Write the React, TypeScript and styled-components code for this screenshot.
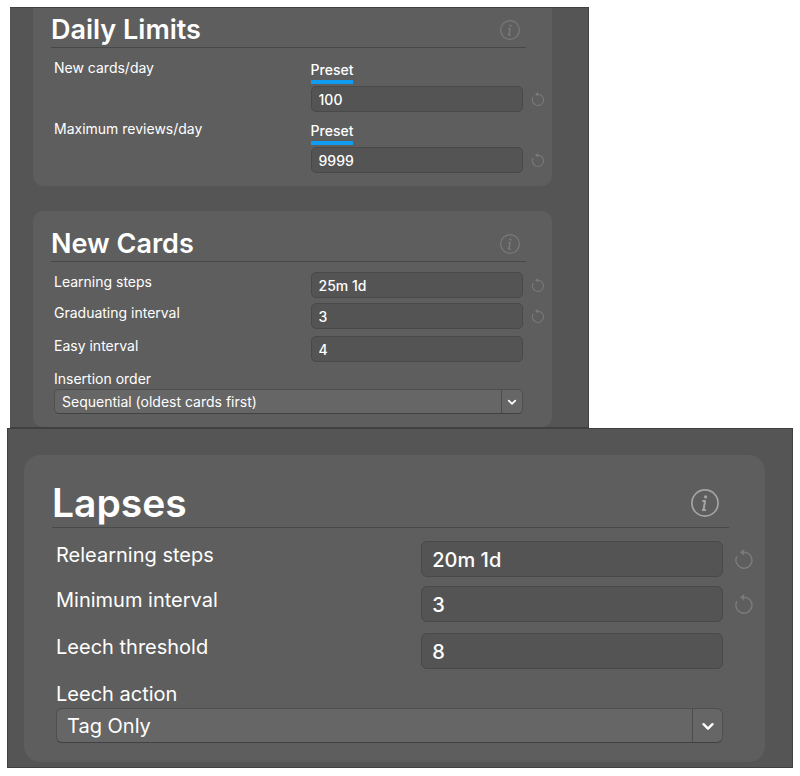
import React, { useId } from "react";
import styled, { createGlobalStyle, ThemeProvider } from "styled-components";

const regular = {
  cardX: 18,
  cardTop: 16,
  cardBottom: 13,
  radius: 10,
  title: 27,
  titleLine: 34,
  titleGap: 10,
  titleRight: 26,
  infoRight: 6,
  info: 20,
  infoColor: "#7a7a7a",
  indent: 3,
  text: 14,
  line: 20,
  rowGap: 5,
  looseGap: 7,
  input: 26,
  inputPad: 7,
  inputRadius: 5,
  select: 25,
  arrow: 21,
  chevron: 10,
  tail: 29,
  reset: 14,
  resetLeft: 8,
};

const large = {
  cardX: 28,
  cardTop: 24,
  cardBottom: 19,
  radius: 16,
  title: 39,
  titleLine: 48,
  titleGap: 13,
  titleRight: 36,
  infoRight: 10,
  info: 28,
  infoColor: "#a4a4a4",
  indent: 4,
  text: 20,
  line: 28,
  rowGap: 9,
  looseGap: 11,
  input: 36,
  inputPad: 10,
  inputRadius: 6,
  select: 35,
  arrow: 30,
  chevron: 14,
  tail: 42,
  reset: 20,
  resetLeft: 11,
};

type Sizes = typeof regular;
type T = { theme: Sizes };

const GlobalStyle = createGlobalStyle`
  * { box-sizing: border-box; }
  body { margin: 0; background: #fff; }
  body, input, select, button { font-family: Inter, "Liberation Sans", sans-serif; }
`;

const Page = styled.main`
  padding: 7px 7px 8px;
`;

const UpperPanel = styled.div`
  display: flex;
  flex-direction: column;
  gap: 25px;
  width: calc(75% - 11px);
  margin-left: 3px;
  padding: 0 36px 0 23px;
  background: #555;
  border: 1px solid #404040;
  border-left: 0;
`;

const LowerPanel = styled.div`
  padding: 26px 27px 5px 16px;
  background: #555;
  border: 1px solid #404040;
`;

const Card = styled.section<{ $cut?: boolean; theme: Sizes }>`
  padding: ${(p) => (p.$cut ? 5 : p.theme.cardTop)}px 0 ${(p) => p.theme.cardBottom}px
    ${(p) => p.theme.cardX}px;
  background: #5e5e5e;
  border-radius: ${(p) =>
    p.$cut ? `0 0 ${p.theme.radius}px ${p.theme.radius}px` : `${p.theme.radius}px`};
`;

const Header = styled.header<T>`
  display: flex;
  align-items: center;
  justify-content: space-between;
  margin: 0 ${(p) => p.theme.titleRight}px ${(p) => p.theme.titleGap}px 0;
  padding-right: ${(p) => p.theme.infoRight}px;
  border-bottom: 1px solid #484848;
`;

const Title = styled.h1<T>`
  margin: 0;
  color: #fff;
  font-size: ${(p) => p.theme.title}px;
  line-height: ${(p) => p.theme.titleLine}px;
  font-weight: 600;
  white-space: nowrap;
`;

const IconButton = styled.button`
  display: flex;
  padding: 0;
  border: 0;
  background: none;
`;

const InfoButton = styled(IconButton)<T>`
  color: ${(p) => p.theme.infoColor};
  svg {
    width: ${(p) => p.theme.info}px;
    height: ${(p) => p.theme.info}px;
  }
`;

const ResetButton = styled(IconButton)<T>`
  align-self: end;
  align-items: center;
  height: ${(p) => p.theme.input}px;
  margin-left: ${(p) => p.theme.resetLeft}px;
  color: #7a7a7a;
  svg {
    width: ${(p) => p.theme.reset}px;
    height: ${(p) => p.theme.reset}px;
  }
`;

const Row = styled.div<{ $loose?: boolean; theme: Sizes }>`
  display: grid;
  grid-template-columns: minmax(0, 23fr) minmax(0, 19fr) ${(p) => p.theme.tail}px;
  margin-top: ${(p) => (p.$loose ? p.theme.looseGap : p.theme.rowGap)}px;
  margin-left: ${(p) => p.theme.indent}px;
  header + & {
    margin-top: 0;
  }
`;

const Label = styled.label<T>`
  color: #fff;
  font-size: ${(p) => p.theme.text}px;
  line-height: ${(p) => p.theme.line}px;
`;

const Control = styled.div`
  display: flex;
  flex-direction: column;
  align-items: flex-start;
`;

const Preset = styled.button<T>`
  margin: 2px 0;
  padding: 0;
  border: 0;
  border-bottom: 4px solid #109cf1;
  background: none;
  color: #fff;
  font-size: ${(p) => p.theme.text}px;
  font-weight: 500;
  line-height: ${(p) => p.theme.line}px;
`;

const TextInput = styled.input<T>`
  width: 100%;
  height: ${(p) => p.theme.input}px;
  padding: 1px ${(p) => p.theme.inputPad}px 0;
  border: 1px solid #494949;
  border-radius: ${(p) => p.theme.inputRadius}px;
  outline: 0;
  background: #545454;
  color: #fff;
  font-size: ${(p) => p.theme.text}px;
  font-weight: 500;
`;

const SelectField = styled.div<T>`
  display: flex;
  flex-direction: column;
  margin: ${(p) => p.theme.looseGap}px ${(p) => p.theme.tail}px 0 ${(p) => p.theme.indent}px;
`;

const SelectBox = styled.div`
  display: grid;
  position: relative;
`;

const Select = styled.select<T>`
  appearance: none;
  height: ${(p) => p.theme.select}px;
  padding: 0 ${(p) => p.theme.arrow + 4}px 0 ${(p) => p.theme.inputPad}px;
  border: 1px solid #4f4f4f;
  border-bottom-color: #414141;
  border-radius: ${(p) => p.theme.inputRadius}px;
  background: #666;
  color: #fff;
  font-size: ${(p) => p.theme.text}px;
`;

const Arrow = styled.span<T>`
  position: absolute;
  top: 1px;
  right: 1px;
  bottom: 1px;
  display: flex;
  align-items: center;
  justify-content: center;
  width: ${(p) => p.theme.arrow}px;
  border-left: 1px solid #4c4c4c;
  color: #fff;
  pointer-events: none;
  svg {
    width: ${(p) => p.theme.chevron}px;
    height: ${(p) => p.theme.chevron}px;
  }
`;

const InfoIcon = () => (
  <svg viewBox="0 0 28 28" fill="none" stroke="currentColor" aria-hidden="true">
    <circle cx="14" cy="14" r="13.1" strokeWidth="1.7" />
    <circle cx="14.6" cy="7.9" r="1.6" fill="currentColor" stroke="none" />
    <path d="M11.4 12.1h2.7l-1.5 8.1M11 20.9h3.9" strokeWidth="2" strokeLinejoin="round" />
  </svg>
);

const ResetIcon = () => (
  <svg viewBox="0 0 20 20" fill="none" stroke="currentColor" aria-hidden="true">
    <path d="M9.6 3.2A8 8 0 1 1 3 7.2" strokeWidth="1.5" />
    <path d="M10.2 0v6.4L5.8 3.2z" fill="currentColor" stroke="none" />
  </svg>
);

const ChevronIcon = () => (
  <svg viewBox="0 0 14 14" fill="none" stroke="currentColor" aria-hidden="true">
    <path d="M2.5 5.2L7 9.6l4.5-4.4" strokeWidth="2.4" strokeLinecap="round" strokeLinejoin="round" />
  </svg>
);

function SectionHeader({ title }: { title: string }) {
  return (
    <Header>
      <Title>{title}</Title>
      <InfoButton type="button" aria-label={`About ${title}`}>
        <InfoIcon />
      </InfoButton>
    </Header>
  );
}

type FieldProps = {
  label: string;
  value: string;
  preset?: boolean;
  resettable?: boolean;
  loose?: boolean;
};

function Field({ label, value, preset, resettable, loose }: FieldProps) {
  const id = useId();
  return (
    <Row $loose={loose}>
      <Label htmlFor={id}>{label}</Label>
      <Control>
        {preset && <Preset type="button">Preset</Preset>}
        <TextInput id={id} defaultValue={value} />
      </Control>
      {resettable && (
        <ResetButton type="button" aria-label={`Reset ${label}`}>
          <ResetIcon />
        </ResetButton>
      )}
    </Row>
  );
}

function Choice({ label, value }: { label: string; value: string }) {
  const id = useId();
  return (
    <SelectField>
      <Label htmlFor={id}>{label}</Label>
      <SelectBox>
        <Select id={id} defaultValue={value}>
          <option>{value}</option>
        </Select>
        <Arrow>
          <ChevronIcon />
        </Arrow>
      </SelectBox>
    </SelectField>
  );
}

export default function App() {
  return (
    <Page>
      <GlobalStyle />
      <ThemeProvider theme={regular}>
        <UpperPanel>
          <Card $cut>
            <SectionHeader title="Daily Limits" />
            <Field label="New cards/day" value="100" preset resettable />
            <Field label="Maximum reviews/day" value="9999" preset resettable loose />
          </Card>
          <Card>
            <SectionHeader title="New Cards" />
            <Field label="Learning steps" value="25m 1d" resettable />
            <Field label="Graduating interval" value="3" resettable />
            <Field label="Easy interval" value="4" loose />
            <Choice label="Insertion order" value="Sequential (oldest cards first)" />
          </Card>
        </UpperPanel>
      </ThemeProvider>
      <ThemeProvider theme={large}>
        <LowerPanel>
          <Card>
            <SectionHeader title="Lapses" />
            <Field label="Relearning steps" value="20m 1d" resettable />
            <Field label="Minimum interval" value="3" resettable />
            <Field label="Leech threshold" value="8" loose />
            <Choice label="Leech action" value="Tag Only" />
          </Card>
        </LowerPanel>
      </ThemeProvider>
    </Page>
  );
}
